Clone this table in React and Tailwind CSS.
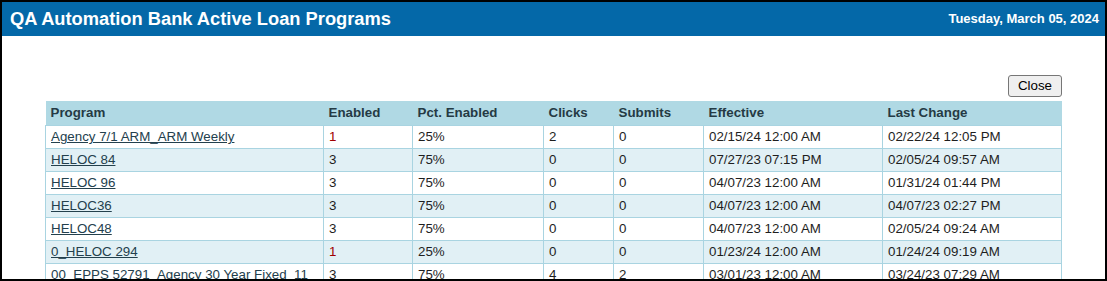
const rows = [
  ["Agency 7/1 ARM_ARM Weekly", "1", "25%", "2", "0", "02/15/24 12:00 AM", "02/22/24 12:05 PM"],
  ["HELOC 84", "3", "75%", "0", "0", "07/27/23 07:15 PM", "02/05/24 09:57 AM"],
  ["HELOC 96", "3", "75%", "0", "0", "04/07/23 12:00 AM", "01/31/24 01:44 PM"],
  ["HELOC36", "3", "75%", "0", "0", "04/07/23 12:00 AM", "04/07/23 02:27 PM"],
  ["HELOC48", "3", "75%", "0", "0", "04/07/23 12:00 AM", "02/05/24 09:24 AM"],
  ["0_HELOC 294", "1", "25%", "0", "0", "01/23/24 12:00 AM", "01/24/24 09:19 AM"],
  ["00_EPPS 52791_Agency 30 Year Fixed_11", "3", "75%", "4", "2", "03/01/23 12:00 AM", "03/24/23 07:29 AM"],
];

const cols = [
  { label: "Program", w: "w-[278px]" },
  { label: "Enabled", w: "w-[89px]" },
  { label: "Pct. Enabled", w: "w-[131px]" },
  { label: "Clicks", w: "w-[70px]" },
  { label: "Submits", w: "w-[90px]" },
  { label: "Effective", w: "w-[179px]" },
  { label: "Last Change", w: "w-[179px]" },
];

export default function App() {
  return (
    <div className="h-[281px] w-[1107px] overflow-hidden border-2 border-black bg-white font-['Liberation_Sans',Arial,sans-serif]">
      <div className="flex h-[34px] items-center justify-between bg-[#0468a8] pl-[8px] pr-[6px] text-white">
        <h1 className="text-[18.3px] font-bold">QA Automation Bank Active Loan Programs</h1>
        <span className="text-[13px] font-bold">Tuesday, March 05, 2024</span>
      </div>
      <div className="pl-[43px] pr-[43px] pt-[39px]">
        <div className="flex justify-end pb-[4px]">
          <button className="h-[22px] rounded-[3px] border border-[#767676] bg-[#efefef] px-[9px] text-[13.33px] text-black">
            Close
          </button>
        </div>
        <table className="w-[1016px] table-fixed border-collapse text-[13.33px]">
          <thead>
            <tr className="h-[24px] bg-[#b0d9e4]">
              {cols.map((c) => (
                <th key={c.label} className={`${c.w} px-[5px] text-left font-bold text-[#253a44]`}>
                  {c.label}
                </th>
              ))}
            </tr>
          </thead>
          <tbody>
            {rows.map((r, i) => (
              <tr key={i} className={`h-[23px] ${i % 2 ? "bg-[#e1f0f5]" : "bg-white"}`}>
                {r.map((v, j) => (
                  <td key={j} className="whitespace-nowrap border border-[#a9d4e1] px-[5px] pt-[1px] text-[#1e1e1e]">
                    {j === 0 ? (
                      <a href="#" className="text-[#23404d] underline">{v}</a>
                    ) : j === 1 && v === "1" ? (
                      <span className="text-[#a00000]">{v}</span>
                    ) : (
                      v
                    )}
                  </td>
                ))}
              </tr>
            ))}
          </tbody>
        </table>
      </div>
    </div>
  );
}
